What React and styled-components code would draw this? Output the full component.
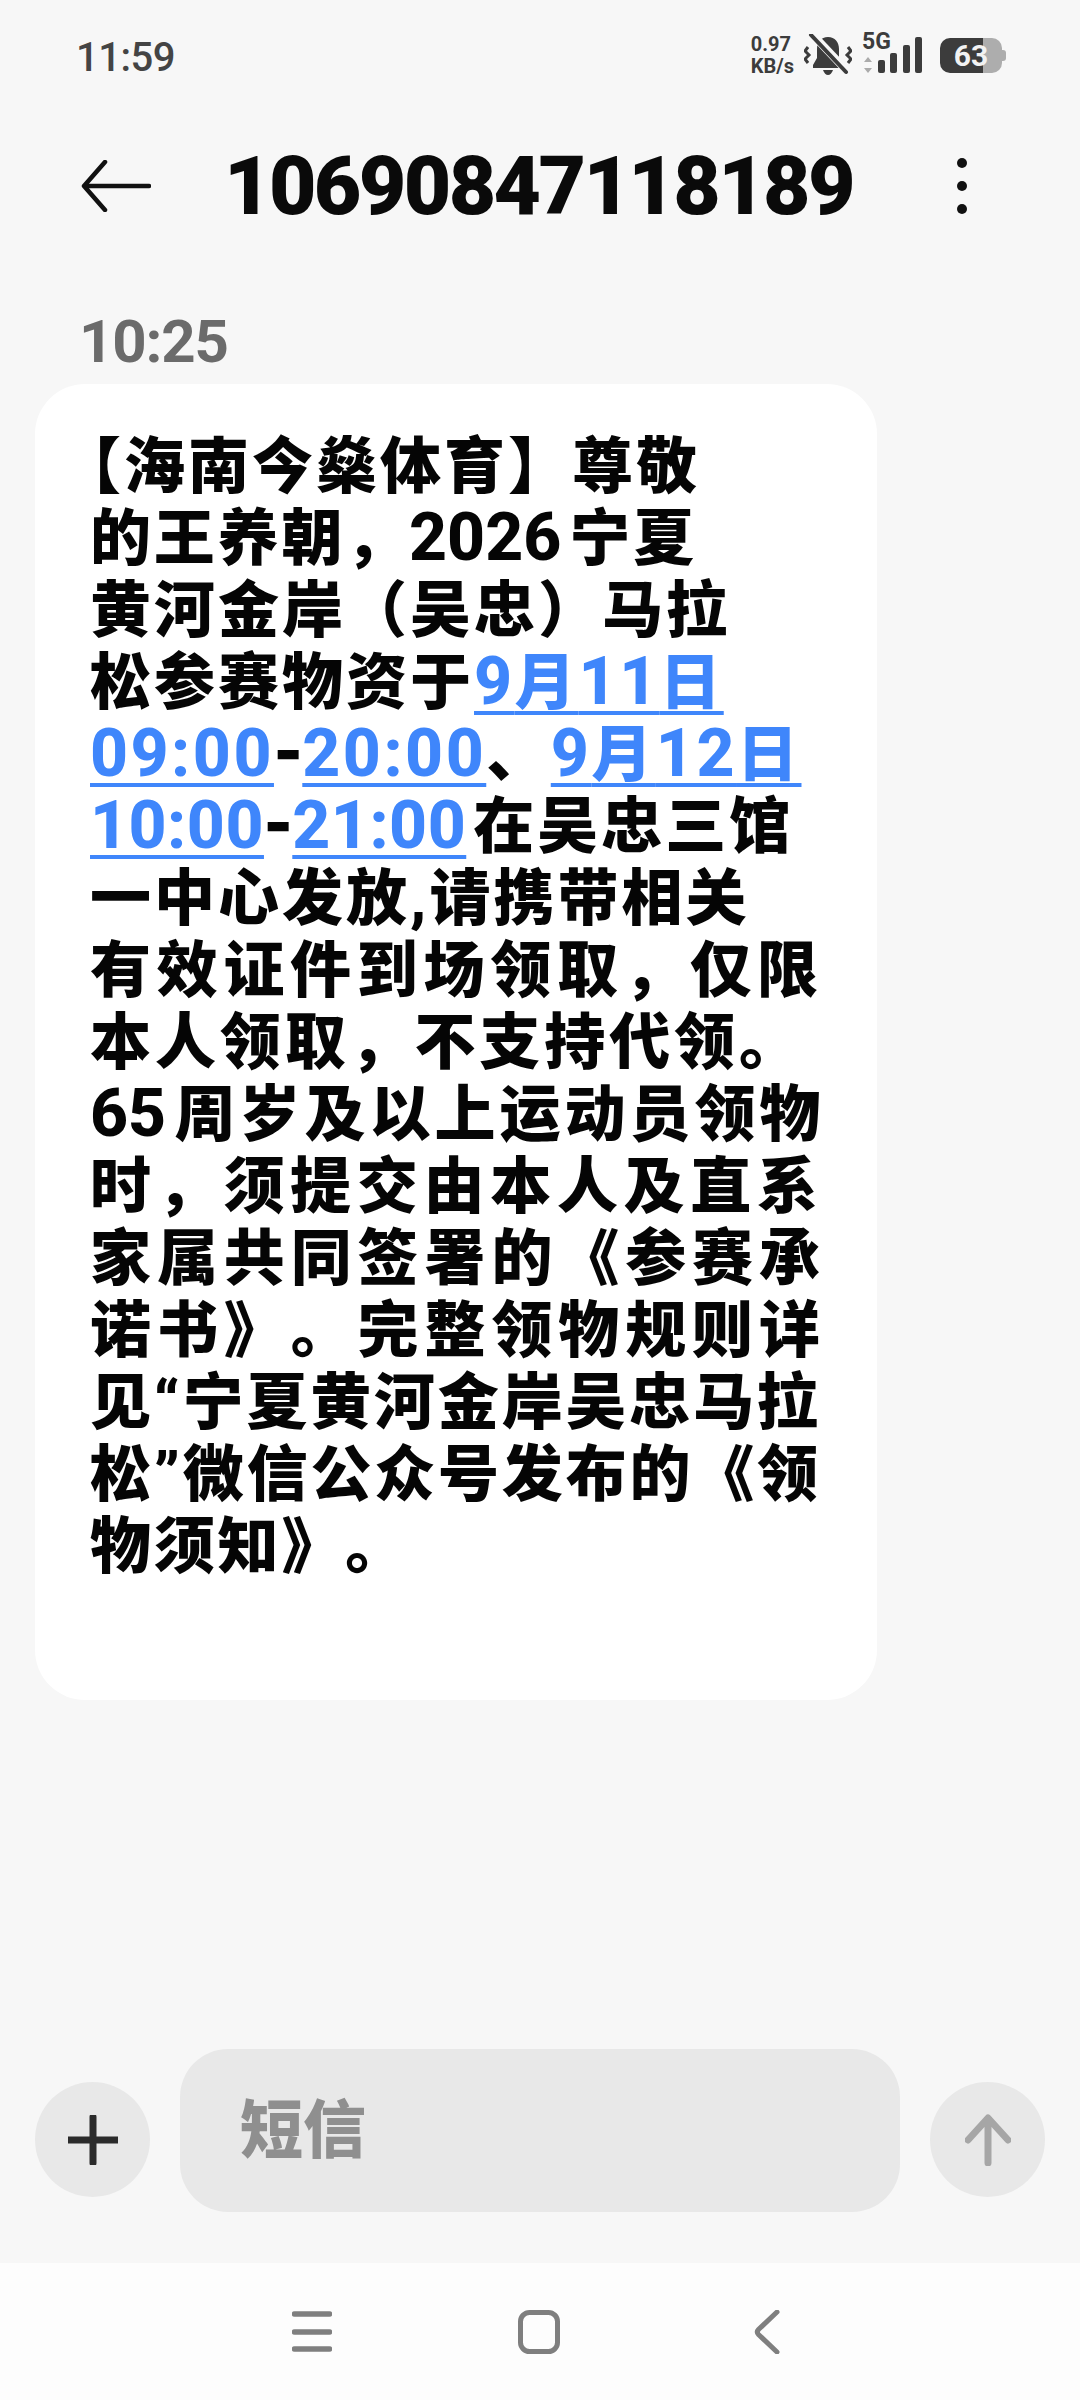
import React from "react";
import styled, { createGlobalStyle } from "styled-components";

const GlobalStyle = createGlobalStyle`
  html, body {
    margin: 0;
    padding: 0;
    background: #f7f7f7;
  }
`;

// spacing: every line of the message is fitted on its own in the screenshot
const MESSAGE = [
  { spacing: 3, indent: -30, parts: ["【海南今燊体育】尊敬"] },
  { spacing: 2.8, parts: ["的王养朝，2026宁夏"] },
  { spacing: 3, parts: ["黄河金岸（吴忠）马拉"] },
  { spacing: 3, parts: ["松参赛物资于", { date: "9月11日" }] },
  { spacing: 3.5, parts: [{ date: "09:00" }, "-", { date: "20:00" }, "、", { date: "9月12日" }] },
  { spacing: 3, parts: [{ date: "10:00", tight: true }, "-", { date: "21:00", tight: true, gap: 7 }, "在吴忠三馆"] },
  { spacing: 3, parts: ["一中心发放,请携带相关"] },
  { spacing: 5.7, parts: ["有效证件到场领取，仅限"] },
  { spacing: 3.9, parts: ["本人领取，不支持代领。"] },
  { spacing: 4, parts: ["65周岁及以上运动员领物"] },
  { spacing: 5.7, parts: ["时，须提交由本人及直系"] },
  { spacing: 5.9, parts: ["家属共同签署的《参赛承"] },
  { spacing: 5.9, parts: ["诺书》。完整领物规则详"] },
  { spacing: 2.8, parts: ["见“宁夏黄河金岸吴忠马拉"] },
  { spacing: 2.8, parts: ["松”微信公众号发布的《领"] },
  { spacing: 2.8, parts: ["物须知》。"] },
];

function Runs({ text }) {
  return text.split(/([0-9:]+|-)/).map((run, i) => {
    if (run === "-") return <Dash key={i}>-</Dash>;
    if (/^[0-9:]+$/.test(run)) return <Num key={i}>{run}</Num>;
    return <span key={i}>{run}</span>;
  });
}

export default function App() {
  return (
    <Page>
      <GlobalStyle />
      <StatusBar>
        <Clock>11:59</Clock>
        <StatusIcons>
          <NetSpeed>
            <span>0.97</span>
            <span>KB/s</span>
          </NetSpeed>
          <BellIcon />
          <Signal />
          <Battery>63</Battery>
        </StatusIcons>
      </StatusBar>

      <Header>
        <BackArrow />
        <Title>10690847118189</Title>
        <MenuDots />
      </Header>

      <Thread>
        <Time>10:25</Time>
        <Bubble>
          {MESSAGE.map((line, i) => (
            <Line key={i} $spacing={line.spacing} $indent={line.indent}>
              {line.parts.map((part, j) =>
                typeof part === "string" ? (
                  <Runs key={j} text={part} />
                ) : (
                  <DateLink key={j} $tight={part.tight} $gap={part.gap}>
                    <Runs text={part.date} />
                  </DateLink>
                )
              )}
            </Line>
          ))}
        </Bubble>
      </Thread>

      <Composer>
        <RoundButton>
          <svg width="50" height="50" viewBox="0 0 50 50">
            <path d="M25 2v46M1 25h48" stroke="#2b2b2b" strokeWidth="7" strokeLinecap="round" />
          </svg>
        </RoundButton>
        <Input>短信</Input>
        <RoundButton>
          <svg width="46" height="52" viewBox="0 0 46 52">
            <path
              d="M23 49V5M3 26 23 4l20 22"
              fill="none"
              stroke="#a6a6a6"
              strokeWidth="7"
              strokeLinecap="round"
              strokeLinejoin="round"
            />
          </svg>
        </RoundButton>
      </Composer>

      <NavBar>
        <svg width="40" height="42" viewBox="0 0 40 42">
          <path d="M2.5 3h35M2.5 21h35M2.5 38h35" stroke="#7f7f7f" strokeWidth="5.5" strokeLinecap="round" />
        </svg>
        <HomeIcon width="42" height="44" viewBox="0 0 42 44">
          <rect x="2.5" y="2.5" width="37" height="39" rx="9" fill="none" stroke="#7f7f7f" strokeWidth="5" />
        </HomeIcon>
        <svg width="26" height="44" viewBox="0 0 26 44">
          <path
            d="M23 2 4.5 19.5c-1.4 1.5-1.4 3.5 0 5L23 42"
            fill="none"
            stroke="#7f7f7f"
            strokeWidth="5"
            strokeLinecap="round"
          />
        </svg>
      </NavBar>
    </Page>
  );
}

function BellIcon() {
  return (
    <svg width="48" height="42" viewBox="0 0 48 42" fill="#3c3c3c">
      <path d="M24 3c7 0 11 5 11 12v9l4 7v3H9v-3l4-7v-9c0-7 4-12 11-12z" />
      <path d="M19 36h10c-1 3-3 5-5 5s-4-2-5-5z" />
      <path d="M8 0 43 37" stroke="#f7f7f7" strokeWidth="8" />
      <path d="M7 1 42 38" stroke="#3c3c3c" strokeWidth="4" strokeLinecap="round" />
      <path d="m4 13-3 4 4 4-4 4 3 4M44 13l3 4-4 4 4 4-3 4" fill="none" stroke="#3c3c3c" strokeWidth="3" />
    </svg>
  );
}

function Signal() {
  return (
    <SignalWrap>
      <SignalTag>5G</SignalTag>
      <svg width="62" height="38" viewBox="0 0 62 38">
        <path d="M6 21 10 26H2zM6 37 2 32H10z" fill="#ababab" />
        <rect x="16" y="24" width="7" height="13" rx="2" fill="#3c3c3c" />
        <rect x="28" y="17" width="7" height="20" rx="2" fill="#3c3c3c" />
        <rect x="41" y="9" width="7" height="28" rx="2" fill="#3c3c3c" />
        <rect x="53" y="1" width="7" height="36" rx="2" fill="#3c3c3c" />
      </svg>
    </SignalWrap>
  );
}

function BackArrow() {
  return (
    <svg width="70" height="52" viewBox="0 0 70 52">
      <path
        d="M68 26H3M24 2 3 26l21 24"
        fill="none"
        stroke="#111"
        strokeWidth="4.5"
        strokeLinecap="round"
        strokeLinejoin="round"
      />
    </svg>
  );
}

function MenuDots() {
  return (
    <svg width="12" height="58" viewBox="0 0 12 58" fill="#111">
      <circle cx="6" cy="6" r="5" />
      <circle cx="6" cy="29" r="5" />
      <circle cx="6" cy="52" r="5" />
    </svg>
  );
}

const Page = styled.div`
  width: 1080px;
  height: 2400px;
  display: flex;
  flex-direction: column;
  background: #f7f7f7;
  overflow: hidden;
  font-family: Roboto, "Noto Sans CJK SC", sans-serif;
`;

const StatusBar = styled.div`
  height: 110px;
  flex: none;
  padding: 0 78px 0 76px;
  display: flex;
  align-items: center;
  justify-content: space-between;
  box-sizing: border-box;
`;

const Clock = styled.div`
  margin-top: 4px;
  font-size: 40px;
  font-weight: 500;
  letter-spacing: -0.5px;
  color: #444;
`;

const StatusIcons = styled.div`
  display: flex;
  align-items: center;
  gap: 10px;
`;

const NetSpeed = styled.div`
  display: flex;
  flex-direction: column;
  font-size: 20px;
  line-height: 22px;
  font-weight: 700;
  color: #3c3c3c;
`;

const SignalWrap = styled.div`
  position: relative;
  width: 62px;
  height: 38px;
`;

const SignalTag = styled.span`
  position: absolute;
  left: 0;
  top: -5px;
  font-size: 23px;
  line-height: 22px;
  font-weight: 700;
  color: #3c3c3c;
`;

const Battery = styled.div`
  position: relative;
  width: 62px;
  height: 35px;
  margin-left: 6px;
  border-radius: 10px;
  background: linear-gradient(90deg, #3c3c3c 0 43px, #adadad 43px);
  color: #f2f2f2;
  font-size: 30px;
  line-height: 35px;
  font-weight: 700;
  text-align: center;

  &::after {
    content: "";
    position: absolute;
    right: -4px;
    top: 12px;
    width: 4px;
    height: 11px;
    border-radius: 0 3px 3px 0;
    background: #adadad;
  }
`;

const Header = styled.div`
  height: 80px;
  margin-top: 36px;
  flex: none;
  padding: 0 112px 0 81px;
  display: flex;
  align-items: center;
  justify-content: space-between;
`;

const Title = styled.div`
  font-size: 82px;
  font-weight: 900;
  line-height: 80px;
  letter-spacing: -2.6px;
  margin-right: 30px;
  color: #0a0a0a;
`;

const Thread = styled.div`
  flex: 1;
  min-height: 0;
  padding: 0 35px;
`;

const Time = styled.div`
  margin: 76px 0 2px 44px;
  font-size: 60px;
  line-height: 80px;
  font-weight: 700;
  letter-spacing: -1.2px;
  color: #6b6b6b;
`;

const Bubble = styled.div`
  width: 842px;
  box-sizing: border-box;
  padding: 47px 0 117px 55px;
  border-radius: 50px;
  background: #fff;
`;

const Line = styled.div`
  height: 72px;
  margin-left: ${(p) => p.$indent || 0}px;
  font-size: 61px;
  line-height: 72px;
  font-weight: 900;
  letter-spacing: ${(p) => p.$spacing}px;
  text-spacing-trim: space-all;
  text-autospace: normal;
  white-space: nowrap;
  color: #050505;
`;

const Num = styled.span`
  font-size: 66px;
  line-height: 0;
  font-weight: 800;
  letter-spacing: 0;
`;

const Dash = styled.span`
  font-family: "Noto Sans CJK SC", sans-serif;
  font-size: 74px;
  line-height: 0;
  letter-spacing: 0;
  color: #050505;
`;

const DateLink = styled.span`
  margin-right: ${(p) => p.$gap || 0}px;
  color: #3f86fb;
  text-autospace: no-autospace;
  text-decoration: underline;
  text-decoration-thickness: 4px;
  text-underline-offset: 7px;
  text-decoration-skip-ink: none;

  ${Num} {
    letter-spacing: ${(p) => (p.$tight ? 0.5 : 2.5)}px;
  }
`;

const Composer = styled.div`
  flex: none;
  height: 163px;
  margin-bottom: 51px;
  padding: 0 35px;
  display: flex;
  align-items: flex-start;
  gap: 30px;
`;

const RoundButton = styled.div`
  width: 115px;
  height: 115px;
  flex: none;
  margin-top: 33px;
  border-radius: 50%;
  background: #e8e8e8;
  display: flex;
  align-items: center;
  justify-content: center;
`;

const Input = styled.div`
  flex: 1;
  height: 163px;
  box-sizing: border-box;
  padding-left: 60px;
  border-radius: 48px;
  background: #e8e8e8;
  color: #8f8f8f;
  font-size: 63px;
  font-weight: 900;
  line-height: 163px;
`;

const NavBar = styled.div`
  flex: none;
  height: 137px;
  padding: 0 300px 0 292px;
  box-sizing: border-box;
  background: #fdfdfd;
  display: flex;
  align-items: center;
  justify-content: space-between;
`;

const HomeIcon = styled.svg`
  margin-right: 8px;
`;
